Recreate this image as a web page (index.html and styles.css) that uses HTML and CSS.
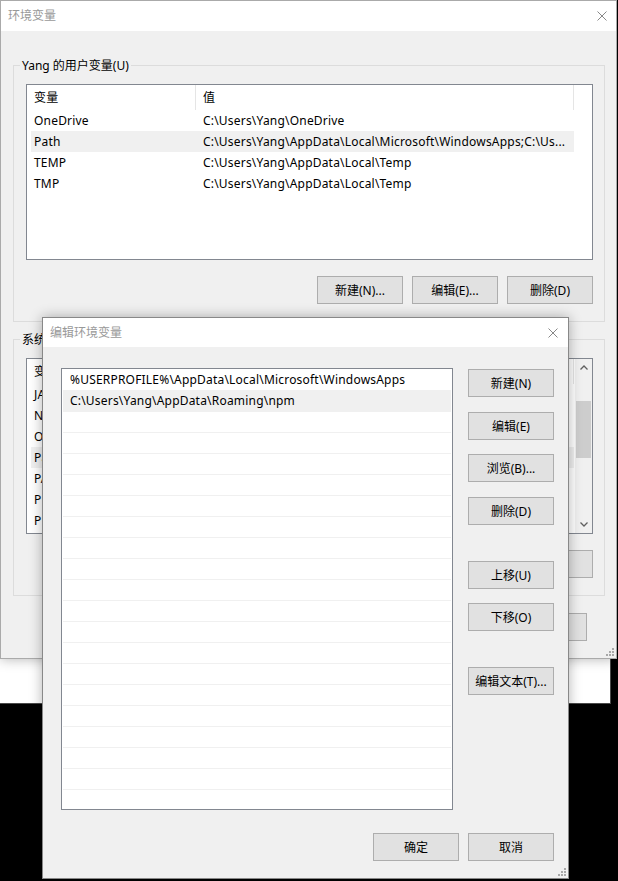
FILE: index.html
```html
<!DOCTYPE html>
<html lang="zh-CN">
<head>
<meta charset="utf-8">
<title>环境变量</title>
<link rel="stylesheet" href="styles.css">
</head>
<body>
<div class="backwin"></div>

<section class="window env">
  <header class="titlebar">
    <span class="title">环境变量</span>
    <svg class="close" viewBox="0 0 10 10"><path d="M0.5 0.5L9.5 9.5M9.5 0.5L0.5 9.5"/></svg>
  </header>
  <div class="env-body">
    <fieldset class="group">
      <legend>Yang 的用户变量(U)</legend>
      <div class="listview">
        <div class="lv-head"><span class="c1">变量</span><span class="c2">值</span></div>
        <div class="lv-row"><span class="c1">OneDrive</span><span class="c2">C:\Users\Yang\OneDrive</span></div>
        <div class="lv-row sel"><span class="c1">Path</span><span class="c2">C:\Users\Yang\AppData\Local\Microsoft\WindowsApps;C:\Us...</span></div>
        <div class="lv-row"><span class="c1">TEMP</span><span class="c2">C:\Users\Yang\AppData\Local\Temp</span></div>
        <div class="lv-row"><span class="c1">TMP</span><span class="c2">C:\Users\Yang\AppData\Local\Temp</span></div>
      </div>
      <div class="btnrow">
        <button class="btn">新建(N)...</button>
        <button class="btn">编辑(E)...</button>
        <button class="btn">删除(D)</button>
      </div>
    </fieldset>
    <fieldset class="group sys">
      <legend>系统变量(S)</legend>
      <div class="listview sys-list">
        <div class="lv-main">
          <div class="lv-head"><span class="c1">变量</span><span class="c2"></span></div>
          <div class="lv-row"><span class="c1">JAVA_HOME</span><span class="c2"></span></div>
          <div class="lv-row"><span class="c1">NUMBER_OF_PROCESSORS</span><span class="c2"></span></div>
          <div class="lv-row"><span class="c1">OS</span><span class="c2"></span></div>
          <div class="lv-row sel"><span class="c1">Path</span><span class="c2"></span></div>
          <div class="lv-row"><span class="c1">PATHEXT</span><span class="c2"></span></div>
          <div class="lv-row"><span class="c1">PROCESSOR_IDENTIFIER</span><span class="c2"></span></div>
          <div class="lv-row"><span class="c1">PROCESSOR_LEVEL</span><span class="c2"></span></div>
        </div>
        <div class="vscroll">
          <div class="vs-btn"><svg class="arrow" viewBox="0 0 8 5"><path d="M0.5 4.5L4 1L7.5 4.5"/></svg></div>
          <div class="vs-track"><div class="vs-thumb"></div></div>
          <div class="vs-btn"><svg class="arrow" viewBox="0 0 8 5"><path d="M0.5 0.5L4 4L7.5 0.5"/></svg></div>
        </div>
      </div>
      <div class="btnrow">
        <button class="btn"></button>
        <button class="btn"></button>
        <button class="btn"></button>
      </div>
    </fieldset>
    <div class="env-actions">
      <button class="btn"></button>
      <button class="btn"></button>
    </div>
  </div>
  <svg class="grip" viewBox="0 0 8 8"><rect x="6" y="0" width="2" height="2"/><rect x="3" y="3" width="2" height="2"/><rect x="6" y="3" width="2" height="2"/><rect x="0" y="6" width="2" height="2"/><rect x="3" y="6" width="2" height="2"/><rect x="6" y="6" width="2" height="2"/></svg>
</section>

<section class="window edit">
  <header class="titlebar">
    <span class="title">编辑环境变量</span>
    <svg class="close" viewBox="0 0 10 10"><path d="M0.5 0.5L9.5 9.5M9.5 0.5L0.5 9.5"/></svg>
  </header>
  <div class="edit-body">
    <div class="edit-main">
      <div class="editlist">
        <div class="el-row">%USERPROFILE%\AppData\Local\Microsoft\WindowsApps</div>
        <div class="el-row sel">C:\Users\Yang\AppData\Roaming\npm</div>
        <div class="el-row"></div>
        <div class="el-row"></div>
        <div class="el-row"></div>
        <div class="el-row"></div>
        <div class="el-row"></div>
        <div class="el-row"></div>
        <div class="el-row"></div>
        <div class="el-row"></div>
        <div class="el-row"></div>
        <div class="el-row"></div>
        <div class="el-row"></div>
        <div class="el-row"></div>
        <div class="el-row"></div>
        <div class="el-row"></div>
        <div class="el-row"></div>
        <div class="el-row"></div>
        <div class="el-row"></div>
        <div class="el-row"></div>
        <div class="el-row"></div>
        <div class="el-row"></div>
      </div>
      <div class="side-btns">
        <button class="btn">新建(N)</button>
        <button class="btn">编辑(E)</button>
        <button class="btn">浏览(B)...</button>
        <button class="btn">删除(D)</button>
        <button class="btn">上移(U)</button>
        <button class="btn">下移(O)</button>
        <button class="btn">编辑文本(T)...</button>
      </div>
    </div>
    <div class="edit-foot">
      <button class="btn">确定</button>
      <button class="btn">取消</button>
    </div>
  </div>
  <svg class="grip" viewBox="0 0 8 8"><rect x="6" y="0" width="2" height="2"/><rect x="3" y="3" width="2" height="2"/><rect x="6" y="3" width="2" height="2"/><rect x="0" y="6" width="2" height="2"/><rect x="3" y="6" width="2" height="2"/><rect x="6" y="6" width="2" height="2"/></svg>
</section>
</body>
</html>
```
FILE: styles.css
```css
* { box-sizing: border-box; }
html, body { margin: 0; }
body {
  width: 618px;
  height: 881px;
  background: #000;
  position: relative;
  overflow: hidden;
  font-family: "Noto Sans", "Noto Sans CJK SC", sans-serif;
  font-size: 12px;
  color: #000;
}

.backwin {
  position: absolute;
  left: -10px;
  top: 400px;
  width: 621px;
  height: 304px;
  background: #fff;
  border-right: 1px solid #4a4a4a;
  border-bottom: 1px solid #4a4a4a;
}

.window {
  position: absolute;
  background: #f0f0f0;
  box-shadow: 0 0 12px rgba(0, 0, 0, 0.3);
}
.env {
  left: 0;
  top: 0;
  width: 617px;
  height: 659px;
  border: 1px solid #aaa;
}
.edit {
  left: 42px;
  top: 317px;
  width: 527px;
  height: 562px;
  border: 1px solid #888;
  display: flex;
  flex-direction: column;
}

.titlebar {
  height: 30px;
  background: #fff;
  display: flex;
  align-items: center;
  justify-content: space-between;
  padding: 0 9px 0 7px;
  flex: none;
}
.edit .titlebar { height: 29px; padding: 0 10px 0 7px; }
.title { color: #999; line-height: 16px; }
.close { width: 10px; height: 10px; stroke: #888; stroke-width: 1; fill: none; }

.env-body { padding: 0 11px 0 12px; }

.group {
  margin: 26px 0 0;
  padding: 10px 11px 17px 12px;
  border: 1px solid #dcdcdc;
  min-width: 0;
}
.group.sys { margin-top: 9px; }
.group legend {
  padding: 0 2px;
  margin-left: -6px;
  line-height: 17px;
}

.listview {
  height: 176px;
  border: 1px solid #828790;
  background: #fff;
  overflow: hidden;
  letter-spacing: 0.2px;
}
.sys-list { display: flex; }
.lv-main { flex: 1; min-width: 0; overflow: hidden; }

.lv-head { display: flex; height: 25px; line-height: 25px; white-space: nowrap; }
.lv-head .c1 { width: 169px; flex: none; padding-left: 7px; border-right: 1px solid #e5e5e5; }
.lv-head .c2 { width: 378px; flex: none; padding-left: 7px; border-right: 1px solid #e5e5e5; }

.lv-row {
  display: flex;
  height: 21px;
  line-height: 21px;
  margin-left: 4px;
  width: 543px;
  white-space: nowrap;
}
.lv-row.sel { background: #f0f0f0; }
.lv-row .c1 { width: 165px; flex: none; padding-left: 3px; overflow: hidden; }
.lv-row .c2 { width: 378px; flex: none; padding-left: 7px; overflow: hidden; }

.vscroll {
  width: 17px;
  flex: none;
  background: #f0f0f0;
  display: flex;
  flex-direction: column;
}
.vs-btn { height: 17px; display: flex; align-items: center; justify-content: center; }
.vs-track { flex: 1; }
.vs-thumb { margin: 25px 1px 0; height: 57px; background: #cdcdcd; }
.arrow { width: 8px; height: 5px; fill: none; stroke: #606060; stroke-width: 1.3; }

.btnrow {
  display: flex;
  justify-content: flex-end;
  gap: 9px;
  margin-top: 16px;
}
.btn {
  width: 86px;
  height: 28px;
  border: 1px solid #adadad;
  background: #e1e1e1;
  font: inherit;
  color: #000;
  padding: 0;
  white-space: nowrap;
}

.env-actions {
  display: flex;
  justify-content: flex-end;
  gap: 9px;
  margin: 17px 18px 0 0;
}

.grip {
  position: absolute;
  right: 2px;
  bottom: 2px;
  width: 8px;
  height: 8px;
  fill: #a8a8a8;
}

.edit-body {
  flex: 1;
  padding: 21px 14px 17px 18px;
  display: flex;
  flex-direction: column;
}
.edit-main { display: flex; align-items: flex-start; }
.editlist {
  width: 392px;
  height: 442px;
  flex: none;
  border: 1px solid #828790;
  background: #fff;
  padding-top: 1px;
  overflow: hidden;
  letter-spacing: 0.2px;
}
.el-row {
  height: 21px;
  line-height: 20px;
  border-bottom: 1px solid #f0f0f0;
  margin: 0 1px;
  padding-left: 7px;
  white-space: nowrap;
}
.el-row.sel { background: #f0f0f0; }

.side-btns { display: flex; flex-direction: column; margin-left: 15px; }
.side-btns .btn:nth-child(1) { margin-top: 1px; }
.side-btns .btn:nth-child(2) { margin-top: 15px; }
.side-btns .btn:nth-child(3) { margin-top: 14px; }
.side-btns .btn:nth-child(4) { margin-top: 15px; }
.side-btns .btn:nth-child(5) { margin-top: 36px; }
.side-btns .btn:nth-child(6) { margin-top: 14px; }
.side-btns .btn:nth-child(7) { margin-top: 36px; }

.edit-foot {
  display: flex;
  justify-content: flex-end;
  gap: 9px;
  margin-top: 23px;
}
```
